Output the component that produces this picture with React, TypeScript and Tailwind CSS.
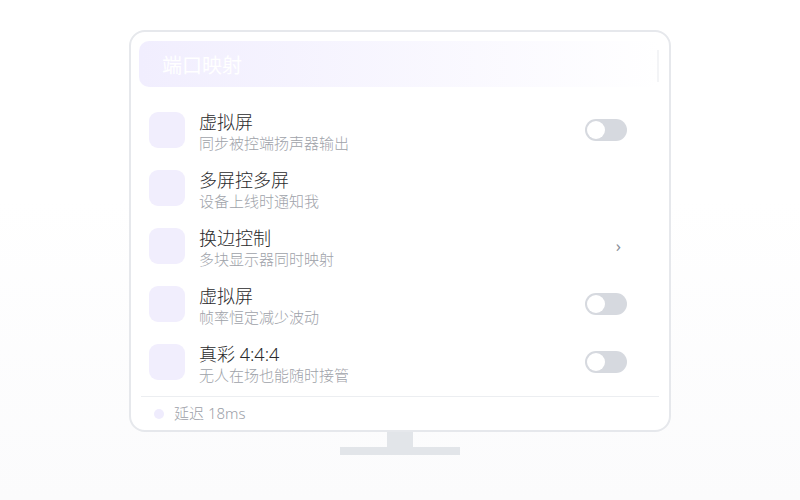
import { FC } from 'react';

type Row = { title: string; sub: string; action: 'toggle' | 'chevron' | 'none' };

const rows: Row[] = [
  { title: '虚拟屏', sub: '同步被控端扬声器输出', action: 'toggle' },
  { title: '多屏控多屏', sub: '设备上线时通知我', action: 'none' },
  { title: '换边控制', sub: '多块显示器同时映射', action: 'chevron' },
  { title: '虚拟屏', sub: '帧率恒定减少波动', action: 'toggle' },
  { title: '真彩 4:4:4', sub: '无人在场也能随时接管', action: 'toggle' },
];

const Toggle: FC = () => (
  <div className="flex h-[22px] w-[42px] items-center rounded-full bg-[#d6d9df] p-[2px]">
    <div className="h-[18px] w-[18px] rounded-full bg-white" />
  </div>
);

const App: FC = () => {
  return (
    <div
      className="flex h-[500px] w-[800px] flex-col items-center bg-gradient-to-b from-white from-40% to-[#fbfbfc] pt-[30px]"
      style={{ fontFamily: '"Noto Sans", "Noto Sans CJK SC", sans-serif' }}
    >
      <div className="flex h-[402px] w-[542px] flex-col rounded-[16px] border-2 border-[#e6e8ec] bg-white px-[8px] pt-[9px]">
        <div className="flex h-[46px] items-center justify-between rounded-[10px] bg-gradient-to-r from-[#f1eefe] to-white pl-[23px] pr-[2px] pt-[4px]">
          <span className="text-[20px] text-white">端口映射</span>
          <div className="h-[32px] w-[2px] bg-[#f3f4f6]" />
        </div>

        <div className="mt-[14px] flex flex-col">
          {rows.map((r, i) => (
            <div key={i} className="flex h-[58px] items-center pl-[10px] pr-[34px]">
              <div className="h-[36px] w-[36px] rounded-[9px] bg-[#f1eefd]" />
              <div className="ml-[14px] flex flex-1 flex-col pt-[4px]">
                <span className="text-[18px] font-light leading-[22px] text-[#2a2a2c]">{r.title}</span>
                <span className="mt-[1px] text-[15px] font-light leading-[19px] text-[#9ea2a9]">{r.sub}</span>
              </div>
              {r.action === 'toggle' && <Toggle />}
              {r.action === 'chevron' && (
                <span className="mr-[6px] text-[17px] text-[#8a8f99]">›</span>
              )}
            </div>
          ))}
        </div>

        <div className="mx-[2px] mt-[5px] border-t border-[#eceef1]" />
        <div className="flex h-[33px] items-center pl-[15px]">
          <div className="h-[10px] w-[10px] rounded-full bg-[#efecfd]" />
          <span className="ml-[10px] text-[15px] font-light text-[#9ca0a8]">延迟 18ms</span>
        </div>
      </div>

      <div className="h-[15px] w-[26px] bg-[#e2e5e9]" />
      <div className="h-[8px] w-[120px] bg-[#e2e5e9]" />
    </div>
  );
};

export default App;
